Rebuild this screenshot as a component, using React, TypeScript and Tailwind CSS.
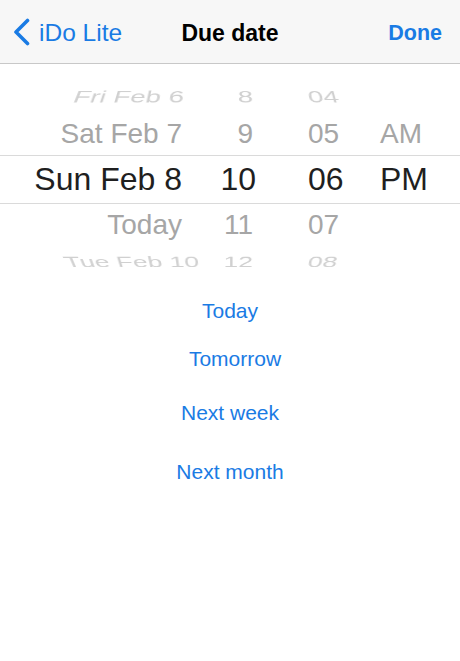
import React from "react";

type PickerRow = {
  date: string;
  hour: string;
  minute: string;
  ampm: string;
};

const rows: PickerRow[] = [
  { date: "Fri Feb 6", hour: "8", minute: "04", ampm: "" },
  { date: "Sat Feb 7", hour: "9", minute: "05", ampm: "AM" },
  { date: "Sun Feb 8", hour: "10", minute: "06", ampm: "PM" },
  { date: "Today", hour: "11", minute: "07", ampm: "" },
  { date: "Tue Feb 10", hour: "12", minute: "08", ampm: "" },
];

// per-row look of the wheel: outer rows tilted away, middle row selected
const rowStyles = [
  "h-[36px] leading-[36px] text-[27.5px] text-[#d0d0d0] [transform:perspective(500px)_rotateX(53deg)]",
  "h-[40px] leading-[37px] text-[28px] text-[#a6a6a6]",
  "h-[49px] leading-[46px] pb-[1px] text-[32px] text-[#1f1f1f] border-y border-[#dadada]",
  "h-[41px] leading-[41px] text-[28px] text-[#a6a6a6]",
  "h-[34px] leading-[34px] text-[26.5px] text-[#d0d0d0] [transform:perspective(500px)_rotateX(-54deg)]",
];

const shortcuts = [
  { label: "Today", cls: "" },
  { label: "Tomorrow", cls: "mt-[4px] pl-[10px]" },
  { label: "Next week", cls: "mt-[10px]" },
  { label: "Next month", cls: "mt-[15px]" },
];

function BackChevron() {
  return (
    <svg width="18" height="28" viewBox="0 0 18 28" className="shrink-0">
      <path d="M15.5 2.5 L4 14 L15.5 25.5" fill="none" stroke="#1a7be4" strokeWidth="3.6" strokeLinecap="round" strokeLinejoin="round" />
    </svg>
  );
}

export default function App() {
  return (
    <div className="w-[460px] h-[661px] bg-white overflow-hidden font-['Liberation_Sans',Arial,sans-serif] select-none">
      {/* Navigation bar */}
      <div className="h-[64px] bg-[#f7f7f7] border-b border-[#c8c8c8] grid grid-cols-[1fr_auto_1fr] items-center pt-[4px]">
        <div className="flex items-center pl-[12px] -mt-[4px]">
          <BackChevron />
          <span className="ml-[9px] mt-[4px] text-[24.5px] leading-none text-[#1a7be4]">iDo Lite</span>
        </div>
        <div className="text-[23px] leading-none font-bold text-black">Due date</div>
        <div className="flex justify-end pr-[18px]">
          <span className="text-[21.5px] leading-none font-bold text-[#1a7be4]">Done</span>
        </div>
      </div>

      {/* Date / time wheel */}
      <div className="pt-[15px]">
        {rows.map((r, i) => (
          <div key={r.date} className={`flex whitespace-nowrap ${rowStyles[i]}`}>
            <div className={`${i === 4 ? "w-[199px]" : i === 0 ? "w-[184px]" : "w-[182px]"} text-right`}>{r.date}</div>
            <div className={`${i === 4 ? "w-[54px]" : i === 2 ? "w-[74px]" : i === 0 ? "w-[69px]" : "w-[71px]"} text-right`}>{r.hour}</div>
            <div className={`${i === 2 ? "ml-[52px]" : "ml-[55px]"} w-[72px]`}>{r.minute}</div>
            <div>{r.ampm}</div>
          </div>
        ))}
      </div>

      {/* Quick picks */}
      <div className="flex flex-col items-center pt-[10px]">
        {shortcuts.map((s) => (
          <button
            key={s.label}
            className={`h-[44px] leading-[44px] text-[21px] text-[#1a7be4] ${s.cls}`}
          >
            {s.label}
          </button>
        ))}
      </div>
    </div>
  );
}
